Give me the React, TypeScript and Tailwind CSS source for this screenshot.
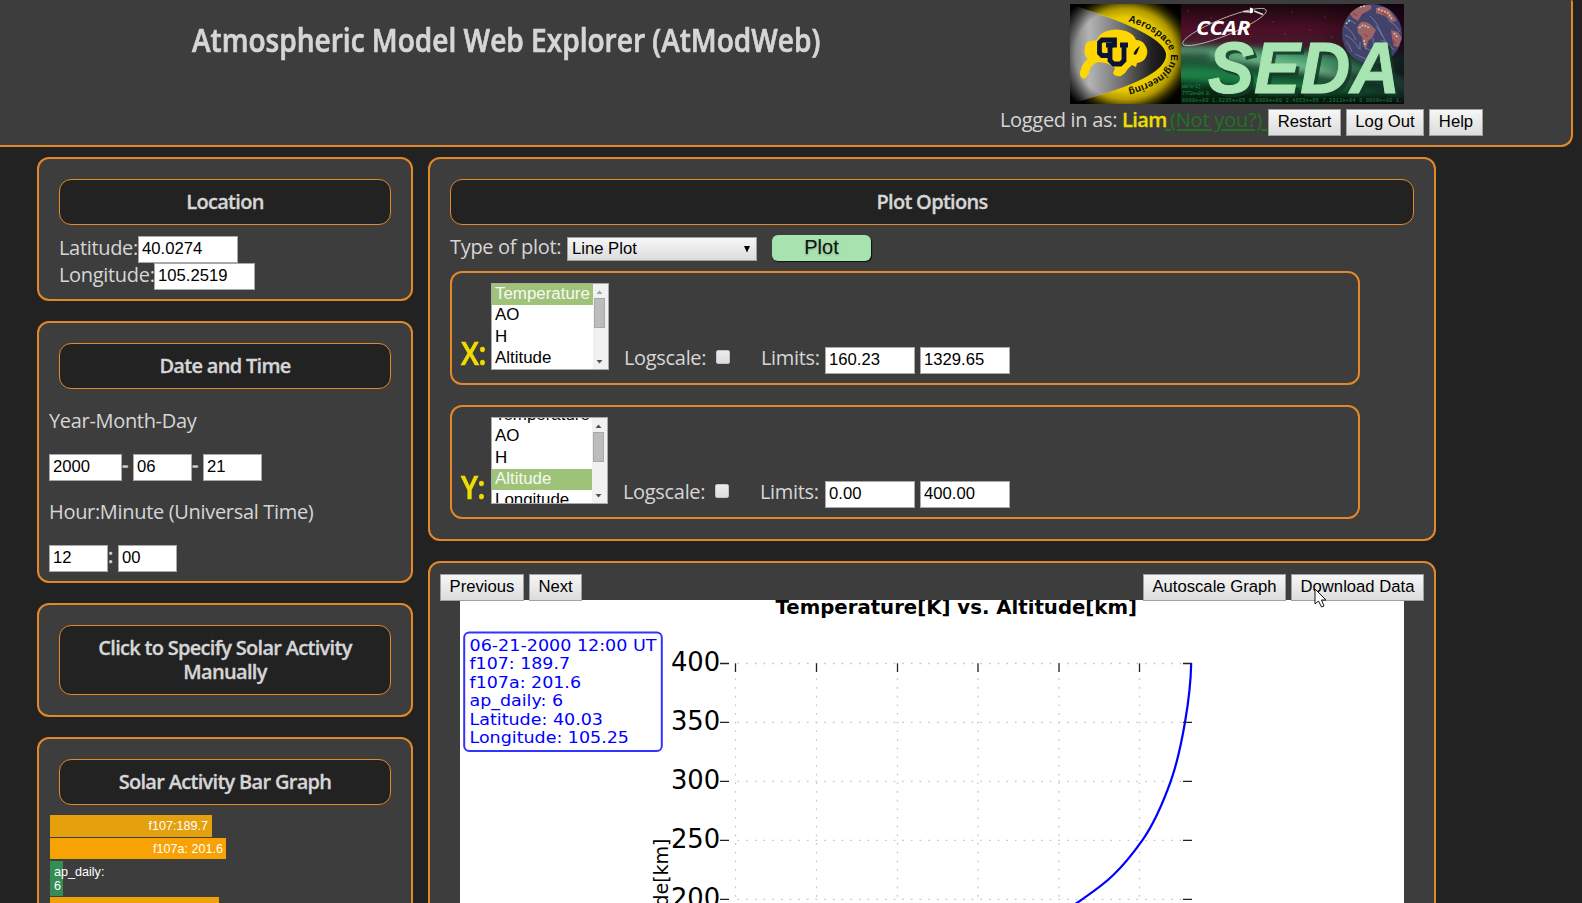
import type { ReactNode } from "react";

const sans = "font-['Open_Sans','Noto_Sans',sans-serif]";
const arial = "font-['Liberation_Sans',Arial,sans-serif] tracking-normal";

function Heading({ children, className = "" }: { children: ReactNode; className?: string }) {
  return (
    <h2
      className={`m-5 flex items-center justify-center rounded-[12px] border border-[#e38828] bg-[#222] px-5 text-center text-[20px] font-semibold leading-[24px] tracking-[-0.7px] [-webkit-text-stroke:0.3px_currentColor] ${className}`}
    >
      {children}
    </h2>
  );
}

function Panel({ children, className = "" }: { children: ReactNode; className?: string }) {
  return <section className={`rounded-[12px] border-2 border-[#e38828] bg-[#3d3d3d] ${className}`}>{children}</section>;
}

function Field({ value, className = "" }: { value: string; className?: string }) {
  return (
    <input
      defaultValue={value}
      className={`h-[27px] shrink-0 rounded-none border border-[#a9a9a9] bg-white px-[3px] pb-[2px] text-[16.67px] leading-none text-black outline-none ${arial} ${className}`}
    />
  );
}

function Btn({ children, className = "" }: { children: ReactNode; className?: string }) {
  return (
    <button
      className={`h-[27px] shrink-0 whitespace-nowrap border border-[#a0a0a0] bg-gradient-to-b from-[#f6f6f6] to-[#dcdcdc] pb-[2px] text-center text-[16.67px] leading-[22px] text-black ${arial} ${className}`}
    >
      {children}
    </button>
  );
}

function ListBox({ options, selected, shift, className = "" }: { options: string[]; selected: string; shift: string; className?: string }) {
  return (
    <div className={`flex h-[87px] shrink-0 overflow-hidden border border-[#a9a9a9] bg-white text-[16.9px] text-black ${arial} ${className}`}>
      <div className={`min-w-0 flex-1 ${shift}`}>
        {options.map((o) => (
          <div
            key={o}
            className={`h-[21.4px] whitespace-nowrap pl-[3px] leading-[20px] ${o === selected ? "bg-[#9fc279] text-white/90" : ""}`}
          >
            {o}
          </div>
        ))}
      </div>
      <div className="flex w-[15px] flex-col items-center bg-[#f1f1f1]">
        <svg width="15" height="14" viewBox="0 0 15 14"><path d="M3.500 10 6.500 6.500l3 3.500z" fill={selected === "Temperature" ? "#a3a3a3" : "#505050"} /></svg>
        <div className="mr-[2px] h-[30px] w-[11px] border border-[#a8a8a8] bg-[#bcbcbc]" />
        <svg className="mt-auto" width="15" height="14" viewBox="0 0 15 14"><path d="M3.500 5 6.500 8.500l3-3.500z" fill="#505050" /></svg>
      </div>
    </div>
  );
}

function Check() {
  return <span className="block size-[14px] shrink-0 rounded-[2px] border border-[#c4c4c4] bg-gradient-to-b from-[#ededed] to-[#dcdcdc]" />;
}

function AxisRow({
  label, options, selected, shift, listClass, limits, nudge,
}: { label: string; options: string[]; selected: string; shift: string; listClass: string; limits: [string, string]; nudge: string }) {
  return (
    <div className="flex h-[114px] w-[910px] items-start rounded-[12px] border-2 border-[#e38828] pl-[9px] pt-[10px]">
      <span className="mt-[50px] w-[30px] shrink-0 text-[32px] font-semibold leading-[40px] tracking-[-0.5px] text-[#eedd00] [-webkit-text-stroke:0.7px_currentColor]">
        <span className="inline-block origin-left scale-x-[0.9]">{label}</span>
      </span>
      <ListBox options={options} selected={selected} shift={shift} className={listClass} />
      <div className={`flex items-start ${nudge}`}>
        <span className="mt-[61px] w-[92px] shrink-0 leading-[27px]">Logscale:</span>
        <div className="mt-[67px]"><Check /></div>
        <span className="ml-[31px] mt-[61px] w-[64px] shrink-0 leading-[27px]">Limits:</span>
      </div>
      <div className="mt-[64px] flex gap-[5px]">
        <Field value={limits[0]} className="w-[90px]" />
        <Field value={limits[1]} className="w-[90px]" />
      </div>
    </div>
  );
}

function Logo() {
  return (
    <svg width="334" height="100" viewBox="0 0 334 100" className="block">
      <defs>
        <radialGradient id="gold" cx="50%" cy="50%" r="66%">
          <stop offset="0" stopColor="#ffe000" /><stop offset="0.55" stopColor="#e8ca00" />
          <stop offset="0.74" stopColor="#a08a00" /><stop offset="0.94" stopColor="#000" />
        </radialGradient>
        <linearGradient id="cone" x1="0" x2="1" y1="0" y2="0">
          <stop offset="0" stopColor="#777" /><stop offset="0.2" stopColor="#b4b4b4" />
          <stop offset="0.5" stopColor="#777" /><stop offset="0.85" stopColor="#222" /><stop offset="1" stopColor="#111" />
        </linearGradient>
        <radialGradient id="vig" cx="50%" cy="50%" r="70%">
          <stop offset="0.65" stopColor="#000" stopOpacity="0" /><stop offset="0.94" stopColor="#000" />
        </radialGradient>
        <linearGradient id="sky" x1="0" x2="0" y1="0" y2="1">
          <stop offset="0" stopColor="#1c0810" /><stop offset="0.25" stopColor="#58102c" />
          <stop offset="0.42" stopColor="#4a2030" /><stop offset="0.56" stopColor="#246444" />
          <stop offset="0.8" stopColor="#0c3c20" /><stop offset="1" stopColor="#06180c" />
        </linearGradient>
        <linearGradient id="shade" x1="0" x2="1" y1="0" y2="0">
          <stop offset="0" stopColor="#000" stopOpacity="0.1" /><stop offset="0.6" stopColor="#000" stopOpacity="0.15" /><stop offset="1" stopColor="#0a0010" stopOpacity="0.7" />
        </linearGradient>
        <filter id="soft" x="-20%" y="-60%" width="140%" height="220%"><feGaussianBlur stdDeviation="3" /></filter>
        <clipPath id="right"><rect x="111" width="223" height="100" /></clipPath>
        <clipPath id="ball"><circle cx="302" cy="30" r="30" /></clipPath>
        <path id="arc" d="M58 17.500C84 25 101 40 101 53C101 66 85 79 50 87.500" />
      </defs>
      <rect width="111" height="100" fill="url(#gold)" />
      <path d="M0 0 17 6Q98 30 98 51Q98 73 23 93L0 100z" fill="#e6cf00" />
      <path d="M0 0 17 6Q96 32 96 51Q96 72 23 93L0 100z" fill="url(#cone)" />
      <rect width="111" height="100" fill="url(#vig)" />
      <path d="M15 44Q15 37 22 37L27 36Q30 29 37 27Q46 24 56 27Q64 30 66 36Q72 36 75 41Q79 47 76 53Q74 58 67 59L66 63L62 61Q58 64 55 69L51 72Q45 73 43 69L45 64Q38 58 28 58L24 60Q19 64 19 69L15 75Q9 74 10 68L12 62Q14 58 18 55Q13 51 15 44z" fill="#ffd700" />
      <g fill="none" stroke="#0c1236" strokeWidth="4.800">
        <path d="M44.500 43.500V36H32L29.500 38.500V49L32 51.500H38.500" />
        <path d="M36 41H43.500M40 41V56.500L43.500 60H50.500L54 56.500V41M50 41H58" />
      </g>
      <path d="M63.500 50Q65 45 70 42L67 49Q66 52 63.500 50z" fill="#111" />
      <text className={arial} fontSize="10" fontWeight="700" fill="#0a0a0a" textLength="116" lengthAdjust="spacing"><textPath href="#arc">Aerospace Engineering</textPath></text>

      <g clipPath="url(#right)">
        <rect x="111" width="223" height="100" fill="url(#sky)" />
        <g filter="url(#soft)">
          <path d="M105 50Q160 48 200 60T270 66L340 88V76L270 54Q200 42 105 42z" fill="#5ccc90" opacity="0.8" />
          <path d="M105 64Q150 60 200 74L340 84V96L200 84L105 76z" fill="#2ab862" opacity="0.6" />
          <path d="M140 54Q220 64 290 80L270 68Q220 52 140 50z" fill="#8ee0a8" opacity="0.8" />
        </g>
        <rect x="111" width="223" height="100" fill="url(#shade)" />
        <g fill="#b0b0b8" opacity="0.6">
          <circle cx="118" cy="7" r="0.500" /><circle cx="141" cy="14" r="0.500" /><circle cx="203" cy="18" r="0.500" /><circle cx="222" cy="8" r="0.500" />
          <circle cx="240" cy="26" r="0.500" /><circle cx="255" cy="13" r="0.500" /><circle cx="262" cy="33" r="0.500" /><circle cx="215" cy="30" r="0.500" />
        </g>
        <g className="font-['Liberation_Mono',monospace]" fontSize="5" fill="#1f8a3e">
          <text x="112" y="84">mW/m^2]:</text>
          <text x="112" y="90.500">7772e+04  0.</text>
          <text x="112" y="97.500" textLength="220">0000e+00  1.0295e+05  0.0000e+00  2.4653e+05  7.2912e+04  0.0000e+00  1.</text>
        </g>
        <g clipPath="url(#ball)">
          <rect x="272" width="60" height="60" fill="#42426a" />
          <path d="M279 9q8-9 21-8 4 3-2 6l-6 3-4 7-5-3zM287 23l4-5q6-1 11 4l4 4-4 8-4 3-2 9-3-5-1-8-4-4zM306 4q9-3 15 4l6 9-5 1-7-6-9-3zM321 26l7 2 4 6-4 9-4-1-2-8z" fill="#9a6468" />
          <path d="M281 6l6-3 8-1M289 24l4-3 7 3M294 36l1 5M308 5l10 4 4 6M324 29l4 5M276 20l4-4" stroke="#d8c0ae" strokeWidth="1.500" fill="none" strokeDasharray="2 1.200" />
          <path d="M283 9l4 3M294 30l4 3M312 8l5 4M323 36l3 4" stroke="#b83a30" strokeWidth="1.500" fill="none" />
          <g stroke="#8a9ed0" strokeWidth="0.800" fill="none" opacity="0.75">
            <path d="M274 22q8 4 12 14M275 31q9 4 14 14M278 15l8 5M300 12q9 8 12 20M306 22q8 9 12 22M295 44q8 2 13 8M311 36q8 3 13 10M285 50l15 7M276 37q4 4 6 11M318 16q8 4 12 12M303 34q0 10 4 14M290 38v8" />
          </g>
        </g>
      </g>
      <ellipse cx="154.500" cy="23" rx="45" ry="8.500" transform="rotate(-22 154.500 23)" fill="none" stroke="#c0c0c0" strokeWidth="0.800" />
      <path d="M173 7.500l8 .500M184 7l9 3.500" stroke="#ddd" strokeWidth="1.500" />
      <path d="M180 3.500l3 1v4l-3 1z" fill="#fff" />
      <text x="126" y="31" className={sans} fontSize="19" fontStyle="italic" fontWeight="700" fill="#fff" textLength="54" lengthAdjust="spacingAndGlyphs">CCAR</text>
      <g className={arial} fontSize="72" fontStyle="italic" fontWeight="700" strokeWidth="1">
        <text x="141" y="92" fill="#143a28" stroke="#143a28" opacity="0.85" textLength="192" lengthAdjust="spacingAndGlyphs">SEDA</text>
        <text x="138" y="89" fill="#a9e5b3" stroke="#a9e5b3" textLength="192" lengthAdjust="spacingAndGlyphs">SEDA</text>
      </g>
    </svg>
  );
}

const gridX = [735.5, 816.5, 897.5, 978, 1059, 1139.5];
const gridY: [number, string][] = [[663.5, "400"], [722.4, "350"], [781.3, "300"], [840.4, "250"], [899.3, "200"]];
const info: [string, number][] = [
  ["06-21-2000 12:00 UT", 187],
  ["f107: 189.7", 100.5],
  ["f107a: 201.6", 111.5],
  ["ap_daily: 6", 93.5],
  ["Latitude: 40.03", 133.5],
  ["Longitude: 105.25", 159.5],
];

function Chart() {
  return (
    <svg width="944" height="320" viewBox="460 600 944 320" className="block bg-white font-['DejaVu_Sans',sans-serif] tracking-normal">
      <text x="775.500" y="613.500" fontSize="19.500" fontWeight="700" textLength="361.500" lengthAdjust="spacingAndGlyphs">Temperature[K] vs. Altitude[km]</text>
      <rect x="464.200" y="632.400" width="197.600" height="118.600" rx="5" fill="#fff" stroke="#3333ff" strokeWidth="2" />
      <g fill="#0000ff" fontSize="16.700">
        {info.map(([t, w], i) => <text key={t} x="469.500" y={650.6 + i * 18.5} textLength={w} lengthAdjust="spacingAndGlyphs">{t}</text>)}
      </g>
      <g stroke="#c6c6c6" strokeWidth="1.300" strokeDasharray="1.700 6.970">
        {gridX.map((x) => <path key={x} d={`M${x} 669.700V920`} />)}
        {gridY.map(([y]) => <path key={y} d={`M737.500 ${y}H1192`} />)}
      </g>
      <path d="M1191.200 663.300C1190.800 683 1188.400 702.600 1185 722.300C1181.600 742 1177.800 761.600 1170.700 781.300C1163.600 801 1154.800 822.600 1142.300 840.300C1133.600 852.500 1124.100 864.600 1113.300 875C1102.300 886 1089 894.500 1076 903.500L1060 913" fill="none" stroke="#0000ff" strokeWidth="2.200" />
      <g stroke="#222" strokeWidth="1.300">
        {gridX.map((x) => <path key={x} d={`M${x} 663.300V672`} />)}
        {gridY.map(([y]) => <path key={y} d={`M720 ${y}H729M1183 ${y}H1192`} />)}
      </g>
      <g fontSize="25.800" textAnchor="end">
        {gridY.map(([y, t]) => <text key={t} x="720.200" y={y + 7.8}>{t}</text>)}
      </g>
      <text transform="translate(667.500 838.500) rotate(-90)" fontSize="19" textAnchor="end">Altitude[km]</text>
    </svg>
  );
}

const list = ["Temperature", "AO", "H", "Altitude", "Longitude"];

export default function App() {
  return (
    <div className={`relative h-[903px] w-[1582px] overflow-hidden bg-[#222] text-[20px] tracking-[-0.32px] text-[#d6d6d6] ${sans}`}>
      <header className="flex h-[147px] w-[1573px] rounded-br-[12px] rounded-tr-[2px] border-b-2 border-r-2 border-[#e38828] bg-[#3d3d3d]">
        <h1 className="ml-[192px] mt-[20px] w-[660px] whitespace-nowrap text-[32px] font-semibold leading-[40px] tracking-normal [-webkit-text-stroke:0.7px_currentColor]">
          <span className="inline-block origin-left scale-x-[0.877]">Atmospheric Model Web Explorer (AtModWeb)</span>
        </h1>
        <div className="ml-[148px] flex flex-col">
          <div className="ml-[70px] mt-[4px]"><Logo /></div>
          <div className="mt-[5px] flex whitespace-nowrap leading-[27px]">
            <span className="mt-[-3px] w-[122px]">Logged in as:</span>
            <span className="mt-[-3px] w-[43px] font-semibold tracking-[-0.6px] text-[#eedd00] [-webkit-text-stroke:0.3px_currentColor]">Liam</span>
            <a className="mt-[-3px] w-[103px] whitespace-pre tracking-[-0.2px] text-[#217321] underline decoration-2 underline-offset-2"> (Not you?) </a>
            <Btn className="w-[73px]">Restart</Btn>
            <Btn className="ml-[5px] w-[78px]">Log Out</Btn>
            <Btn className="ml-[5px] w-[54px]">Help</Btn>
          </div>
        </div>
      </header>

      <div className="flex items-start gap-[15px] pl-[37px] pt-[10px]">
        <div className="flex w-[376px] shrink-0 flex-col gap-5">
          <Panel className="h-[144px]">
            <Heading className="mb-[11px] h-[46px]">Location</Heading>
            <div className="flex pl-[20px] leading-[27px]"><span className="mt-[-2px] w-[79px]">Latitude:</span><Field value="40.0274" className="w-[100px] px-[2px]" /></div>
            <div className="flex pl-[20px] leading-[27px]"><span className="mt-[-2px] w-[95px]">Longitude:</span><Field value="105.2519" className="w-[101px]" /></div>
          </Panel>
          <Panel className="h-[262px]">
            <Heading className="mb-0 h-[46px]">Date and Time</Heading>
            <div className="pl-[10px]">
              <p className="mt-[18px] leading-[27px]">Year-Month-Day</p>
              <div className="mt-[20px] flex leading-[21px]">
                <Field value="2000" className="w-[73px]" /><span className="w-[11px] [-webkit-text-stroke:0.6px_currentColor]">-</span>
                <Field value="06" className="w-[59px]" /><span className="w-[11px] [-webkit-text-stroke:0.6px_currentColor]">-</span>
                <Field value="21" className="w-[59px]" />
              </div>
              <p className="mt-[17px] leading-[27px]">Hour:Minute (Universal Time)</p>
              <div className="mt-[20px] flex leading-[21px]">
                <Field value="12" className="w-[59px]" /><span className="w-[10px] [-webkit-text-stroke:0.6px_currentColor]">:</span>
                <Field value="00" className="w-[59px]" />
              </div>
            </div>
          </Panel>
          <Panel className="h-[114px]">
            <Heading className="h-[70px]">Click to Specify Solar Activity Manually</Heading>
          </Panel>
          <Panel className="h-[300px]">
            <Heading className="mb-[10px] h-[46px]">Solar Activity Bar Graph</Heading>
            <div className={`flex flex-col pl-[11px] text-[12.6px] leading-[14px] text-white ${arial}`}>
              <div className="h-[22px] w-[162px] bg-[#e5a00d] pr-[4px] pt-[4px] text-right">f107:189.7</div>
              <div className="mt-[1px] h-[21px] w-[176px] bg-[#f7a305] pr-[3px] pt-[4px] text-right">f107a: 201.6</div>
              <div className="mt-[2px] h-[35px] w-[13px] bg-[#358d55] pl-[4px] pt-[4px]">ap_daily: 6</div>
              <div className="mt-[1px] h-[22px] w-[169px] bg-[#f0a108]" />
            </div>
          </Panel>
        </div>

        <main className="flex w-[1008px] shrink-0 flex-col gap-5">
          <Panel className="h-[384px]">
            <Heading className="mb-0 h-[46px]">Plot Options</Heading>
            <div className="flex pl-[20px] pt-[10px]">
              <span className="w-[117px] leading-[24px]">Type of plot:</span>
              <div className={`mt-[2px] flex h-[24px] w-[190px] items-center justify-between border border-[#a0a0a0] bg-gradient-to-b from-[#f6f6f6] to-[#dcdcdc] px-[4px] text-[16.67px] leading-none text-black ${arial}`}>
                <span>Line Plot</span>
                <svg width="8" height="7" viewBox="0 0 8 7" className="mr-[1px]"><path d="M1 0h6L4 6.500z" fill="#000" /></svg>
              </div>
              <button className={`ml-[15px] h-[26px] w-[99px] rounded-[6px] bg-[#a7e3ae] pb-[2px] text-[20px] leading-[24px] text-[#111] shadow-[1px_1px_1px_#111] [text-shadow:0px_1px_2px_#7fa886] ${arial}`}>Plot</button>
            </div>
            <div className="flex flex-col gap-5 pl-[20px] pt-[10px]">
              <AxisRow label="X:" options={list} selected="Temperature" shift="" listClass="w-[118px]" limits={["160.23", "1329.65"]} nudge="ml-[15px]" />
              <AxisRow label="Y:" options={list} selected="Altitude" shift="mt-[-13.200px]" listClass="w-[117px]" limits={["0.00", "400.00"]} nudge="ml-[15px] mr-[1px]" />
            </div>
          </Panel>
          <Panel className="relative h-[360px]">
            <div className="relative z-10 flex px-[10px] pt-[11px]">
              <Btn className="w-[84px]">Previous</Btn>
              <Btn className="ml-[5px] w-[53px]">Next</Btn>
              <Btn className="ml-auto w-[143px]">Autoscale Graph</Btn>
              <Btn className="ml-[5px] w-[133px]">Download Data</Btn>
            </div>
            <div className="ml-[30px] mt-[-1px]"><Chart /></div>
          </Panel>
        </main>
      </div>

      <svg width="14" height="20" viewBox="0 0 14 20" className="absolute left-[1314px] top-[588px] z-20">
        <path d="M1 1V16L4.500 13 7.500 19 10 18 7.500 12H12z" fill="#fff" stroke="#111" strokeWidth="1" />
      </svg>
    </div>
  );
}
